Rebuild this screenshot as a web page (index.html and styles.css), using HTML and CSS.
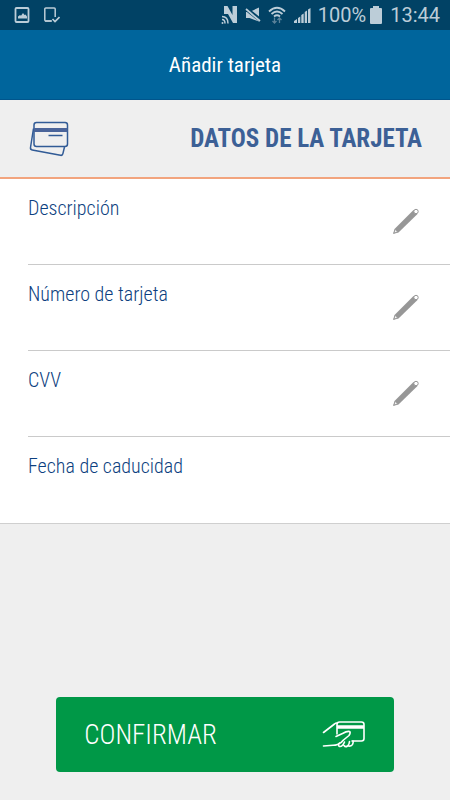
FILE: index.html
```html
<!DOCTYPE html>
<html lang="es">
<head>
  <meta charset="UTF-8">
  <meta name="viewport" content="width=device-width, initial-scale=1.0">
  <title>Añadir tarjeta</title>
  <link rel="stylesheet" href="styles.css">
</head>
<body>
  <svg class="defs" width="0" height="0" aria-hidden="true">
    <symbol id="pencil" viewBox="0 0 28 28">
      <path d="M1 26l1.500-5L21.500 2l4 4L6.500 24.500z" fill="#979797"/>
      <path d="M2 25l1.300-3.500 2.200 2.200z" fill="#fff" stroke="#979797" stroke-width=".8"/>
      <circle cx="24" cy="3.500" r="2.200" fill="#fff" stroke="#979797"/>
    </symbol>
  </svg>

  <div class="status">
    <div class="status-left">
      <svg width="16" height="16" viewBox="0 0 16 16">
        <rect x="1.500" y="1" width="13" height="14" rx="1" fill="none" stroke="#bccdd8" stroke-width="1.800"/>
        <path d="M4 11.500V9.500L6 8l1 .8L9 6l1.500 2 1-.5 1.500 2v2z" fill="#bccdd8"/>
      </svg>
      <svg width="16" height="16" viewBox="0 0 16 16">
        <path d="M7 14H1.800a1 1 0 0 1-1-1V2a1 1 0 0 1 1-1h8.400a1 1 0 0 1 1 1v8" fill="none" stroke="#bccdd8" stroke-width="1.500"/>
        <path d="M1 14h7M8.500 12l2.500 2.500L15.500 10" fill="none" stroke="#bccdd8" stroke-width="1.700"/>
      </svg>
    </div>
    <div class="status-right">
      <svg width="18" height="20" viewBox="0 0 18 20">
        <path d="M4 9V1h3.500l5 9V1H17v17h-4L8 9z" fill="#bccdd8"/>
        <path d="M2 11.500q6 0 6 7M2 14.500q3 0 3 4" fill="none" stroke="#bccdd8" stroke-width="1.500"/>
        <circle cx="2.500" cy="18" r="1" fill="#bccdd8"/>
      </svg>
      <svg width="16" height="16" viewBox="0 0 16 16">
        <path d="M1 5h3.500L14 .5v14L4.500 11H1z" fill="#bccdd8"/>
        <path d="M0 1l16 12.500" stroke="#014265" stroke-width="4"/>
        <path d="M1 2l14 12" stroke="#bccdd8" stroke-width="1.800"/>
      </svg>
      <svg width="18" height="18" viewBox="0 0 18 18">
        <path d="M1 5.500Q9-2 17 5.500M3.500 8q5.500-5 11 0M6 10.500q3-2.500 6 0" fill="none" stroke="#bccdd8" stroke-width="1.800"/>
        <path d="M6.500 11.500v5.500M4.500 15l2 2 2-2M11.500 17v-5M9.500 14l2-2 2 2" fill="none" stroke="#5b8299" stroke-width="1.300"/>
      </svg>
      <svg width="18" height="17" viewBox="0 0 18 17">
        <path d="M1 16v-2l3-2v4zM5 16v-5l2.300-1.500V16zM8.300 16V8l2.400-1.500V16zM11.700 16V5l2.300-1.500V16zM15 16V2.500L17.500 1v15z" fill="#bccdd8"/>
      </svg>
      <span class="battery">100%
        <svg width="14" height="20" viewBox="0 0 14 20">
          <path d="M4 1h6v2h2a1 1 0 0 1 1 1v14a1 1 0 0 1-1 1H2a1 1 0 0 1-1-1V4a1 1 0 0 1 1-1h2z" fill="#bccdd8"/>
        </svg>
      </span>
      <span>13:44</span>
    </div>
  </div>

  <header class="topbar">
    <h1>Añadir tarjeta</h1>
  </header>

  <form class="card-form">
    <div class="section">
      <svg width="42" height="36" viewBox="0 0 42 36" fill="none" stroke="#315b96" stroke-width="1.500">
        <rect x="6" y="1.500" width="33.500" height="24" rx="2.500"/>
        <path d="M5.500 7.500L2.500 26.500q-.3 2 1.700 2.400l28.300 5.400q2 .4 2.400-1.600L36.500 26"/>
        <path d="M6 9h33.500" stroke="#4a649a" stroke-width="4"/>
        <path d="M20.500 14.500h14"/>
      </svg>
      <h2>DATOS DE LA TARJETA</h2>
    </div>

    <div class="fields">
      <div class="field">
        <div class="field-text">
          <label for="descripcion">Descripción</label>
          <input type="text" id="descripcion">
        </div>
        <svg width="28" height="28"><use href="#pencil"/></svg>
      </div>
      <div class="field">
        <div class="field-text">
          <label for="numero">Número de tarjeta</label>
          <input type="text" id="numero" inputmode="numeric">
        </div>
        <svg width="28" height="28"><use href="#pencil"/></svg>
      </div>
      <div class="field">
        <div class="field-text">
          <label for="cvv">CVV</label>
          <input type="text" id="cvv" inputmode="numeric" maxlength="4">
        </div>
        <svg width="28" height="28"><use href="#pencil"/></svg>
      </div>
      <div class="field">
        <div class="field-text">
          <label for="caducidad">Fecha de caducidad</label>
          <input type="text" id="caducidad">
        </div>
      </div>
    </div>

    <button type="submit" class="confirm">
      <span>CONFIRMAR</span>
      <svg width="44" height="28" viewBox="0 0 44 28" fill="none" stroke="#fff" stroke-width="1.600" stroke-linecap="round" stroke-linejoin="round">
        <path d="M15 13V3.500Q15 1 17.500 1h22Q42 1 42 3.500v14q0 2.500-2.500 2.500H30"/>
        <path d="M15 6h27" stroke-width="3.500" stroke-linecap="butt"/>
        <path d="M1.500 11.500L12.500 3q1-1 2.500-1"/>
        <path d="M14 15.500l6.500-3q4.500-2.500 7-2 1.500 1-.5 4L21.500 19q-2 3-6 4.500-2 .8-4.500.8L1.500 25"/>
        <path d="M17.500 22q-2 2 0 3.500 3 .5 5-4.500M22 24.500q1.500 2 3.500.5 2-2 2-4.500M26.500 25q3 .5 4-1.500 1-2 .5-3.500"/>
      </svg>
    </button>
  </form>
</body>
</html>
```
FILE: styles.css
```css
* {
  box-sizing: border-box;
}
body {
  margin: 0;
  min-height: 100vh;
  display: flex;
  flex-direction: column;
  background: #efefef;
  font-family: "Liberation Sans Narrow", "Arial Narrow", "Roboto Condensed", "Liberation Sans", sans-serif;
  color: #0d3f80;
}
svg {
  display: block;
  flex: none;
}
.defs {
  position: absolute;
}
h1, h2 {
  margin: 0;
}

/* status bar */
.status {
  display: flex;
  justify-content: space-between;
  align-items: center;
  height: 30px;
  padding: 0 10px 0 14px;
  background: #014265;
  color: #bccdd8;
  font-family: Roboto, sans-serif;
  font-size: 20px;
}
.status-left {
  display: flex;
  gap: 14px;
}
.status-right {
  display: flex;
  align-items: center;
  gap: 7px;
}
.battery {
  display: flex;
  align-items: center;
  gap: 3px;
}

.topbar {
  display: flex;
  justify-content: center;
  align-items: center;
  height: 70px;
  background: #00659c;
  border-bottom: 1px solid #00558c;
  color: #fff;
}
.topbar h1 {
  font-size: 21px;
  line-height: 28px;
  font-weight: normal;
}

.card-form {
  flex: 1;
  display: flex;
  flex-direction: column;
}
.section {
  display: flex;
  justify-content: space-between;
  align-items: center;
  height: 79px;
  padding: 0 28px;
  border-bottom: 2px solid #f2a47e;
}
.section h2 {
  font-size: 25px;
  color: #3c6096;
}

.fields {
  padding-left: 28px;
  background: #fff;
  border-bottom: 1px solid #cfcfcf;
}
.field {
  display: flex;
  align-items: center;
  height: 86px;
  padding-right: 30px;
  border-bottom: 1px solid #cacaca;
}
.field:last-child {
  border-bottom: none;
}
.field-text {
  flex: 1;
  display: flex;
  flex-direction: column;
}
.field label {
  font-size: 20px;
  font-weight: 300;
  line-height: 28px;
}
.field input {
  width: 100%;
  height: 28px;
  padding: 0;
  border: none;
  outline: none;
  background: transparent;
  font: inherit;
  font-size: 20px;
  color: inherit;
}

.confirm {
  display: flex;
  justify-content: space-between;
  align-items: center;
  width: 75%;
  height: 75px;
  margin: auto auto 28px;
  padding: 0 28px;
  border: none;
  border-radius: 4px;
  background: #009847;
  color: #fff;
  font-family: inherit;
  font-size: 27px;
  font-weight: 300;
  cursor: pointer;
}
```
